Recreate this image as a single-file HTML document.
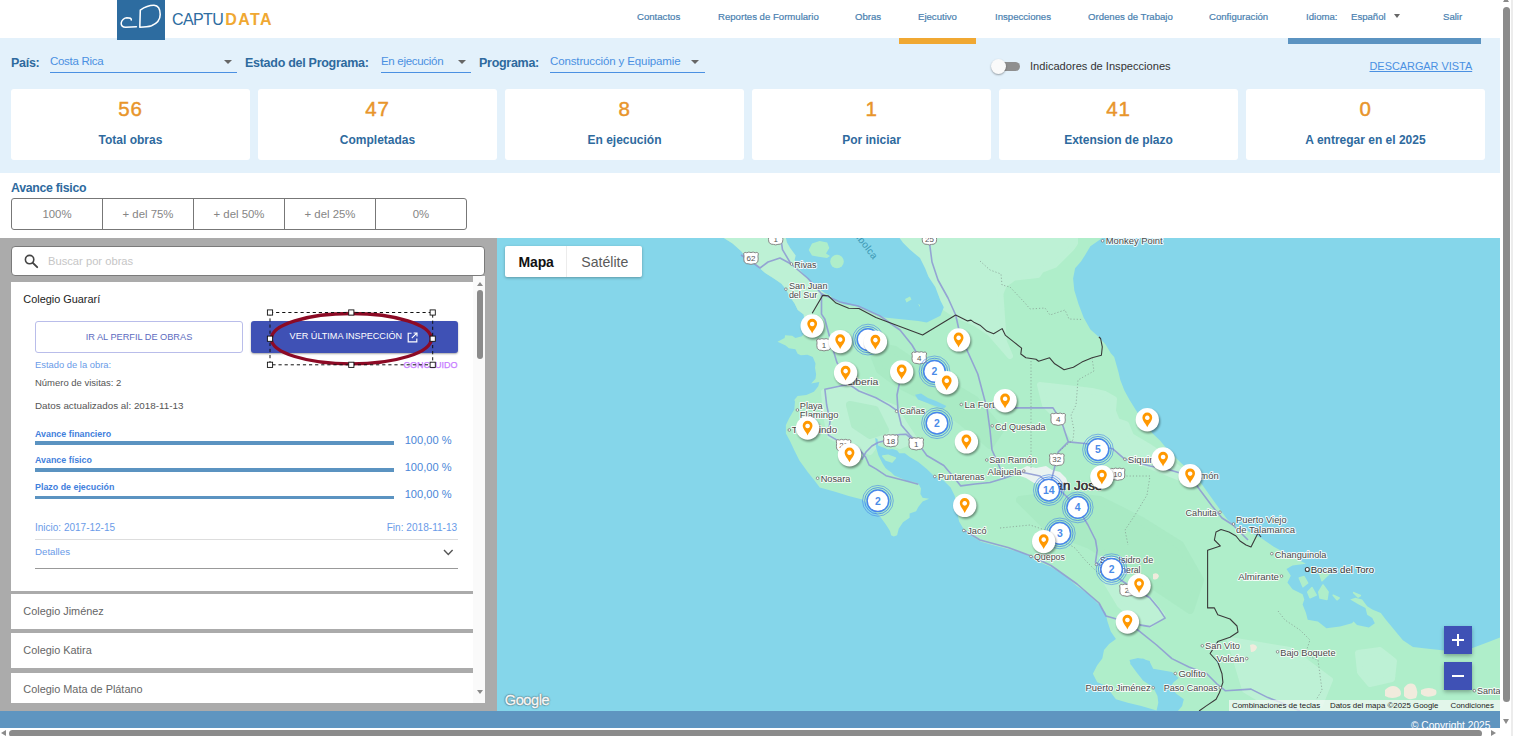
<!DOCTYPE html>
<html lang="es">
<head>
<meta charset="utf-8">
<title>CaptuData - Ejecutivo</title>
<style>
*{box-sizing:border-box;margin:0;padding:0}
html,body{width:1513px;height:736px;overflow:hidden;background:#fff}
body{font-family:"Liberation Sans",sans-serif;position:relative;color:#2e6a9e}
.abs{position:absolute}
#hdr{left:0;top:0;width:1500px;height:38px;background:#fff}
#logo{left:117px;top:0;width:48px;height:40px;background:#2d6ca0}
#brand{left:172px;top:8px;font-size:16px;line-height:24px;color:#2d6ca0;letter-spacing:-0.6px;white-space:nowrap}
#brand b{color:#f0a832;font-weight:bold;letter-spacing:1.45px;margin-left:2px}
.nav{top:10px;-webkit-text-stroke:.2px #4a7fb0;font-size:9.6px;line-height:13px;color:#4a7fb0;white-space:nowrap;text-align:center}
#band{left:0;top:38px;width:1500px;height:135px;background:#e3f1fb}
.lbl{font-size:12.5px;font-weight:bold;color:#2e6a9e;white-space:nowrap;line-height:16px;letter-spacing:-0.28px}
.sel{border-bottom:1px solid #4a90e2;height:20px;font-size:11.5px;color:#4a90e2;line-height:16px;white-space:nowrap;overflow:hidden;letter-spacing:-0.3px}
.caret{width:0;height:0;border-left:4px solid transparent;border-right:4px solid transparent;border-top:4px solid #666}
.card{top:89.4px;width:239px;height:71px;background:#fff;border-radius:3px;text-align:center}
.card .n{position:absolute;left:0;right:0;top:8px;font-size:20.5px;line-height:24px;color:#e8952b;-webkit-text-stroke:0.45px #e8952b;letter-spacing:0.8px}
.card .t{position:absolute;left:0;right:0;top:43px;font-size:12px;line-height:16px;font-weight:bold;color:#2e6a9e}
#grp{left:11px;top:198.3px;width:456px;height:31.3px;border:1px solid #777;border-radius:3px;display:flex}
#grp div{flex:1;border-right:1px solid #777;text-align:center;font-size:11.4px;line-height:31.6px;color:#858585}
#grp div:last-child{border-right:0}
#grey{left:0;top:238px;width:497px;height:473px;background:#ababab}
#map{left:497px;top:238px;width:1003px;height:473px;background:#86d6ea;overflow:hidden}
#foot{left:0;top:711px;width:1500px;height:17px;background:#5f95c0;overflow:hidden}
#vsb{left:1500px;top:0;width:13px;height:736px;background:#fff}
#hsb{left:0;top:728px;width:1500px;height:8px;background:#fff;overflow:hidden}

#search{left:11px;top:246px;width:474px;height:30px;background:#fff;border:1px solid #7a7a7a;border-radius:4px}
#search span{position:absolute;left:36px;top:6.6px;font-size:11.2px;line-height:14px;color:#c6c6c6}
#list{left:11px;top:276px;width:474px;height:427px;background:#ababab;overflow:hidden}
.item{position:absolute;left:0;width:462px;background:#fff}
.item h4{position:absolute;left:12.3px;font-weight:normal;font-size:10.9px;line-height:14px;color:#666;white-space:nowrap}
#sb{position:absolute;left:462px;top:0;width:12px;height:427px;background:#fafafa}
.t10{position:absolute;font-size:10px;line-height:12px;white-space:nowrap}
.bar{position:absolute;left:24px;width:359.4px;height:3.7px;background:#5b93c1}
.pct{position:absolute;left:393.7px;font-size:11.1px;line-height:14px;color:#4a86d8;white-space:nowrap}
.pl{position:absolute;left:24px;font-size:8.9px;line-height:12px;font-weight:bold;color:#3f80dc;white-space:nowrap}
</style>
</head>
<body>
<div id="hdr" class="abs"></div>
<div id="band" class="abs"></div>
<div id="logo" class="abs"><svg width="48" height="40" viewBox="0 0 48 40" fill="none" stroke="#fff" stroke-width="1.55" stroke-linecap="round" stroke-linejoin="round"><path d="M14.3 20 C14.4 18.4 13.2 17.8 9.9 17.8 C7.6 17.9 4.5 19.8 4.2 23 C4 25.6 5.6 27.2 8.7 27.3 L19.4 26.7"/><path d="M23.3 10.1 L22.8 27.2 C27 27.2 31.2 26.9 34.5 25.8 C39.5 23.8 43.2 19.5 43.2 14.6 C43.2 9.5 41 5.6 37 5.3 C32 5.2 27.5 7.2 23.3 10.1 Z"/></svg></div>
<div id="brand" class="abs">CAPTU<b>DATA</b></div>

<div class="abs nav" style="left:637px">Contactos</div>
<div class="abs nav" style="left:718px">Reportes de Formulario</div>
<div class="abs nav" style="left:855px">Obras</div>
<div class="abs nav" style="left:918px">Ejecutivo</div>
<div class="abs nav" style="left:995px">Inspecciones</div>
<div class="abs nav" style="left:1088px">Ordenes de Trabajo</div>
<div class="abs nav" style="left:1209px">Configuración</div>
<div class="abs nav" style="left:1306px">Idioma:</div>
<div class="abs nav" style="left:1351px">Español</div>
<div class="abs nav" style="left:1443px">Salir</div>
<div class="abs" style="left:899px;top:38px;width:77px;height:6px;background:#f0a832"></div>
<div class="abs" style="left:1288px;top:38px;width:193px;height:6px;background:#5b93c1"></div>

<div class="abs lbl" style="left:11px;top:54.8px">País:</div>
<div class="abs sel" style="left:50px;top:53px;width:187px">Costa Rica</div>
<div class="abs caret" style="left:224px;top:60px"></div><div class="abs caret" style="left:458px;top:60px"></div><div class="abs caret" style="left:691px;top:60px"></div><div class="abs caret" style="left:1394px;top:14px;border-left-width:3.3px;border-right-width:3.3px"></div><div class="abs lbl" style="left:245px;top:54.8px">Estado del Programa:</div>
<div class="abs sel" style="left:381px;top:53px;width:90px">En ejecución</div>
<div class="abs lbl" style="left:479px;top:54.8px">Programa:</div>
<div class="abs sel" style="left:550px;top:53px;width:155px;letter-spacing:-.13px">Construcción y Equipamie</div>

<div class="abs" style="left:995px;top:62px;width:25px;height:9px;border-radius:5px;background:#8f8f8f"></div>
<div class="abs" style="left:991px;top:59px;width:15px;height:15px;border-radius:50%;background:#fafafa;box-shadow:0 1px 2px rgba(0,0,0,.35)"></div>
<div class="abs" style="left:1030px;top:59px;font-size:11.1px;line-height:14px;color:#333;white-space:nowrap">Indicadores de Inspecciones</div>
<div class="abs" style="left:1369.5px;top:59px;font-size:10.9px;line-height:14px;color:#4a90e2;text-decoration:underline;white-space:nowrap">DESCARGAR VISTA</div>
<div class="abs card" style="left:11px"><div class="n">56</div><div class="t">Total obras</div></div>
<div class="abs card" style="left:258px"><div class="n">47</div><div class="t">Completadas</div></div>
<div class="abs card" style="left:505px"><div class="n">8</div><div class="t">En ejecución</div></div>
<div class="abs card" style="left:752px"><div class="n">1</div><div class="t">Por iniciar</div></div>
<div class="abs card" style="left:999px"><div class="n">41</div><div class="t">Extension de plazo</div></div>
<div class="abs card" style="left:1246px"><div class="n">0</div><div class="t">A entregar en el 2025</div></div>

<div class="abs lbl" style="left:11px;top:179.8px;font-size:12.3px">Avance fisico</div>
<div id="grp" class="abs"><div>100%</div><div>+ del 75%</div><div>+ del 50%</div><div>+ del 25%</div><div>0%</div></div>

<div id="grey" class="abs"></div>
<div id="search" class="abs">
<svg style="position:absolute;left:12px;top:7px" width="15" height="15" viewBox="0 0 15 15"><circle cx="5.6" cy="5.6" r="4.2" fill="none" stroke="#444" stroke-width="1.6"/><path d="M8.8 8.8 L13.2 13.2" stroke="#444" stroke-width="1.9" stroke-linecap="round"/></svg>
<span>Buscar por obras</span></div>
<div id="list" class="abs">
 <div class="item" style="top:6px;height:308.5px">
  <h4 style="top:10px;color:#222">Colegio Guararí</h4>
  <div style="position:absolute;left:24px;top:39px;width:208px;height:32px;border:1px solid #b9bdea;border-radius:3px;text-align:center;font-size:9.2px;line-height:30px;color:#5c6bc0;white-space:nowrap">IR AL PERFIL DE OBRAS</div>
  <div style="position:absolute;left:240px;top:39px;width:207px;height:32px;background:#3f51b5;border-radius:3px;box-shadow:0 1px 2px rgba(0,0,0,.35);color:#fff;font-size:9.1px;line-height:31px;white-space:nowrap"><span style="position:absolute;left:38.6px">VER ÚLTIMA INSPECCIÓN</span>
   <svg style="position:absolute;left:155.5px;top:10.5px" width="11" height="11" viewBox="0 0 11 11" fill="none" stroke="#fff" stroke-width="1.15"><path d="M4.6 1.2 H1.2 V9.8 H9.8 V6.4"/><path d="M6.6 1 H10 V4.4 M9.8 1.2 L4.8 6.2"/></svg></div>
  <div class="t10" style="left:24px;top:76.8px;color:#6a9be8;font-size:9.4px">Estado de la obra:</div>
  <div class="t10" style="left:392.4px;top:76.5px;color:#c77dff;-webkit-text-stroke:.25px #c77dff;font-size:9px">CONCLUIDO</div>
  <div class="t10" style="left:24px;top:94.6px;color:#555;font-size:9.47px">Número de visitas: 2</div>
  <div class="t10" style="left:24px;top:118.4px;color:#555;font-size:9.84px">Datos actualizados al: 2018-11-13</div>
  <div class="pl" style="top:145.6px">Avance financiero</div><div class="bar" style="top:159.1px"></div><div class="pct" style="top:151px">100,00 %</div>
  <div class="pl" style="top:172.4px">Avance físico</div><div class="bar" style="top:186px"></div><div class="pct" style="top:178px">100,00 %</div>
  <div class="pl" style="top:199.4px">Plazo de ejecución</div><div class="bar" style="top:213.6px"></div><div class="pct" style="top:205px">100,00 %</div>
  <div class="t10" style="left:24px;top:240px;color:#6a9be8;font-size:10px">Inicio: 2017-12-15</div>
  <div class="t10" style="left:375.7px;top:240px;color:#6a9be8;font-size:10.1px">Fin: 2018-11-13</div>
  <div style="position:absolute;left:24px;top:257px;width:423px;height:1px;background:#ddd"></div>
  <div class="t10" style="left:24px;top:263.8px;color:#6a9be8;font-size:9.7px">Detalles</div>
  <svg style="position:absolute;left:432px;top:266.5px" width="11" height="7" viewBox="0 0 11 7"><path d="M1 1 L5.3 5.4 L9.6 1" fill="none" stroke="#555" stroke-width="1.4"/></svg>
  <div style="position:absolute;left:24px;top:286px;width:423px;height:1px;background:#999"></div>
 </div>
 <div class="item" style="top:318.2px;height:35px"><h4 style="top:10.3px">Colegio Jiménez</h4></div>
 <div class="item" style="top:356.9px;height:35.6px"><h4 style="top:10.3px">Colegio Katira</h4></div>
 <div class="item" style="top:396.6px;height:31px"><h4 style="top:9.7px">Colegio Mata de Plátano</h4></div>
 <div id="sb">
  <div style="position:absolute;left:3.5px;top:6px;width:0;height:0;border-left:3.5px solid transparent;border-right:3.5px solid transparent;border-bottom:4.5px solid #8b8b8b"></div>
  <div style="position:absolute;left:3.7px;top:14.3px;width:6px;height:69px;border-radius:3px;background:#8b8b8b"></div>
  <div style="position:absolute;left:3.5px;top:414px;width:0;height:0;border-left:3.5px solid transparent;border-right:3.5px solid transparent;border-top:4.5px solid #8b8b8b"></div>
 </div>
</div>
<svg class="abs" style="left:262px;top:305px;overflow:visible" width="180" height="68" viewBox="262 305 180 68">
 <ellipse cx="351.3" cy="338.7" rx="80" ry="25.2" fill="none" stroke="#8c0a25" stroke-width="3.3"/>
 <rect x="270" y="312.5" width="162.7" height="52.3" fill="none" stroke="#111" stroke-width="1" stroke-dasharray="3.2 2.9"/>
 <g fill="#fff" stroke="#111" stroke-width="0.9">
  <rect x="267.4" y="309.9" width="5.2" height="5.2"/><rect x="348.7" y="309.9" width="5.2" height="5.2"/><rect x="430.1" y="309.9" width="5.2" height="5.2"/>
  <rect x="267.4" y="336.1" width="5.2" height="5.2"/><rect x="430.1" y="336.1" width="5.2" height="5.2"/>
  <rect x="267.4" y="362.2" width="5.2" height="5.2"/><rect x="348.7" y="362.2" width="5.2" height="5.2"/><rect x="430.1" y="362.2" width="5.2" height="5.2"/>
 </g>
</svg>

<div id="map" class="abs">
<svg width="1003" height="473" viewBox="497 238 1003 473" style="position:absolute;left:0;top:0;font-family:'Liberation Sans',sans-serif">
<defs><filter id="bl" x="-30%" y="-30%" width="160%" height="160%"><feGaussianBlur stdDeviation="0.9"/></filter></defs>
<rect x="497" y="238" width="1003" height="473" fill="#85d6ea"/>
<path d="M1102.3 238.0 L1090.4 246.2 L1085.3 254.7 L1081.0 261.5 L1075.1 268.3 L1073.1 278.5 L1074.3 290.3 L1078.5 303.9 L1083.6 317.5 L1090.4 329.4 L1098.9 337.0 L1105.7 344.7 L1110.8 353.2 L1114.2 357.0 L1118.5 372.3 L1120.3 380.0 L1124.4 390.6 L1129.3 399.6 L1137.4 412.6 L1145.0 423.5 L1152.9 433.8 L1160.0 440.5 L1166.8 448.7 L1177.0 458.9 L1183.8 465.5 L1195.7 475.7 L1204.2 487.6 L1212.7 499.4 L1221.2 511.3 L1227.2 519.3 L1234.0 525.2 L1247.6 531.1 L1261.1 537.9 L1273.8 546.8 L1295.9 558.7 L1306.0 563.8 L1292.5 565.5 L1286.5 568.9 L1290.8 575.7 L1287.4 582.5 L1292.5 589.3 L1302.6 594.3 L1304.3 599.4 L1302.6 604.5 L1306.0 613.0 L1307.7 619.8 L1317.9 621.5 L1326.4 628.3 L1340.0 626.6 L1351.9 623.2 L1353.6 621.5 L1357.0 624.9 L1368.9 627.5 L1374.8 623.2 L1372.3 618.1 L1367.2 614.7 L1365.5 607.9 L1358.7 604.5 L1350.2 599.4 L1355.3 597.7 L1362.1 599.4 L1367.2 606.2 L1372.3 609.6 L1380.8 613.0 L1385.9 619.8 L1394.4 630.0 L1402.9 640.2 L1413.0 647.0 L1428.3 648.7 L1444.5 650.4 L1472.5 648.0 L1487.8 642.2 L1500.0 637.5 L1500.0 711.0 L1177.9 711.0 L1182.1 706.1 L1183.8 699.3 L1177.0 694.2 L1170.2 687.4 L1173.6 682.3 L1178.7 678.1 L1171.9 672.1 L1163.4 670.4 L1153.2 668.7 L1149.8 662.0 L1143.0 658.6 L1132.9 659.4 L1130.3 663.7 L1136.3 672.1 L1143.0 680.6 L1153.2 687.4 L1157.5 695.9 L1158.3 702.7 L1156.6 710.4 L1141.3 706.1 L1127.8 702.7 L1115.9 699.3 L1110.8 692.5 L1105.7 685.7 L1097.2 682.3 L1092.9 673.8 L1097.2 665.3 L1102.3 658.6 L1104.0 650.1 L1109.1 644.1 L1115.9 639.0 L1110.8 631.4 L1107.4 621.2 L1105.7 613.0 L1098.9 604.5 L1088.7 594.3 L1076.8 585.9 L1064.9 575.7 L1051.3 567.2 L1036.0 560.4 L1024.2 553.5 L1008.0 549.0 L993.6 545.3 L981.0 541.8 L972.7 536.8 L964.2 530.0 L959.1 521.5 L957.4 513.0 L954.8 496.0 L950.6 487.6 L943.8 480.8 L934.5 476.5 L926.8 468.9 L918.3 462.1 L909.8 457.0 L904.8 453.3 L899.3 453.3 L897.2 450.5 L892.8 448.9 L887.9 449.5 L884.1 447.8 L878.4 445.7 L877.6 439.1 L875.2 437.8 L875.9 446.8 L878.4 455.3 L882.7 463.8 L885.5 468.0 L887.8 470.0 L891.1 472.2 L894.3 475.4 L900.9 478.2 L907.4 480.9 L913.9 482.0 L918.3 483.6 L921.0 488.5 L920.4 493.9 L922.6 497.7 L929.1 498.8 L922.6 501.5 L918.3 507.0 L916.1 511.3 L909.6 513.5 L909.6 517.8 L903.0 522.2 L898.7 528.7 L897.1 535.2 L893.8 536.5 L891.1 535.2 L890.0 530.9 L885.7 524.3 L880.2 516.7 L874.2 511.0 L862.3 499.4 L848.7 496.0 L835.1 491.8 L819.8 487.6 L814.7 480.8 L807.9 472.3 L799.4 460.4 L794.3 450.2 L790.0 441.0 L785.9 433.4 L785.9 424.9 L789.3 418.1 L794.3 409.6 L795.0 401.5 L794.3 400.0 L797.6 396.1 L806.3 395.0 L813.9 391.7 L818.3 386.3 L819.3 382.0 L811.2 383.6 L815.5 378.7 L816.1 374.3 L815.0 367.8 L815.5 363.5 L812.8 357.0 L807.4 354.8 L800.9 355.3 L797.6 353.7 L795.4 349.3 L788.9 348.3 L785.7 345.5 L777.5 341.7 L784.6 337.9 L785.1 335.2 L792.2 335.8 L795.4 337.9 L802.0 336.3 L806.0 330.0 L804.5 322.0 L803.7 314.5 L797.8 309.9 L794.6 303.4 L790.2 296.9 L785.9 289.3 L781.5 283.8 L773.9 278.4 L765.2 273.0 L756.5 265.3 L746.7 258.8 L741.3 251.2 L732.6 243.6 L723.9 238.0 Z" fill="#afeeca"/>
<clipPath id="lc"><path d="M1102.3 238.0 L1090.4 246.2 L1085.3 254.7 L1081.0 261.5 L1075.1 268.3 L1073.1 278.5 L1074.3 290.3 L1078.5 303.9 L1083.6 317.5 L1090.4 329.4 L1098.9 337.0 L1105.7 344.7 L1110.8 353.2 L1114.2 357.0 L1118.5 372.3 L1120.3 380.0 L1124.4 390.6 L1129.3 399.6 L1137.4 412.6 L1145.0 423.5 L1152.9 433.8 L1160.0 440.5 L1166.8 448.7 L1177.0 458.9 L1183.8 465.5 L1195.7 475.7 L1204.2 487.6 L1212.7 499.4 L1221.2 511.3 L1227.2 519.3 L1234.0 525.2 L1247.6 531.1 L1261.1 537.9 L1273.8 546.8 L1295.9 558.7 L1306.0 563.8 L1292.5 565.5 L1286.5 568.9 L1290.8 575.7 L1287.4 582.5 L1292.5 589.3 L1302.6 594.3 L1304.3 599.4 L1302.6 604.5 L1306.0 613.0 L1307.7 619.8 L1317.9 621.5 L1326.4 628.3 L1340.0 626.6 L1351.9 623.2 L1353.6 621.5 L1357.0 624.9 L1368.9 627.5 L1374.8 623.2 L1372.3 618.1 L1367.2 614.7 L1365.5 607.9 L1358.7 604.5 L1350.2 599.4 L1355.3 597.7 L1362.1 599.4 L1367.2 606.2 L1372.3 609.6 L1380.8 613.0 L1385.9 619.8 L1394.4 630.0 L1402.9 640.2 L1413.0 647.0 L1428.3 648.7 L1444.5 650.4 L1472.5 648.0 L1487.8 642.2 L1500.0 637.5 L1500.0 711.0 L1177.9 711.0 L1182.1 706.1 L1183.8 699.3 L1177.0 694.2 L1170.2 687.4 L1173.6 682.3 L1178.7 678.1 L1171.9 672.1 L1163.4 670.4 L1153.2 668.7 L1149.8 662.0 L1143.0 658.6 L1132.9 659.4 L1130.3 663.7 L1136.3 672.1 L1143.0 680.6 L1153.2 687.4 L1157.5 695.9 L1158.3 702.7 L1156.6 710.4 L1141.3 706.1 L1127.8 702.7 L1115.9 699.3 L1110.8 692.5 L1105.7 685.7 L1097.2 682.3 L1092.9 673.8 L1097.2 665.3 L1102.3 658.6 L1104.0 650.1 L1109.1 644.1 L1115.9 639.0 L1110.8 631.4 L1107.4 621.2 L1105.7 613.0 L1098.9 604.5 L1088.7 594.3 L1076.8 585.9 L1064.9 575.7 L1051.3 567.2 L1036.0 560.4 L1024.2 553.5 L1008.0 549.0 L993.6 545.3 L981.0 541.8 L972.7 536.8 L964.2 530.0 L959.1 521.5 L957.4 513.0 L954.8 496.0 L950.6 487.6 L943.8 480.8 L934.5 476.5 L926.8 468.9 L918.3 462.1 L909.8 457.0 L904.8 453.3 L899.3 453.3 L897.2 450.5 L892.8 448.9 L887.9 449.5 L884.1 447.8 L878.4 445.7 L877.6 439.1 L875.2 437.8 L875.9 446.8 L878.4 455.3 L882.7 463.8 L885.5 468.0 L887.8 470.0 L891.1 472.2 L894.3 475.4 L900.9 478.2 L907.4 480.9 L913.9 482.0 L918.3 483.6 L921.0 488.5 L920.4 493.9 L922.6 497.7 L929.1 498.8 L922.6 501.5 L918.3 507.0 L916.1 511.3 L909.6 513.5 L909.6 517.8 L903.0 522.2 L898.7 528.7 L897.1 535.2 L893.8 536.5 L891.1 535.2 L890.0 530.9 L885.7 524.3 L880.2 516.7 L874.2 511.0 L862.3 499.4 L848.7 496.0 L835.1 491.8 L819.8 487.6 L814.7 480.8 L807.9 472.3 L799.4 460.4 L794.3 450.2 L790.0 441.0 L785.9 433.4 L785.9 424.9 L789.3 418.1 L794.3 409.6 L795.0 401.5 L794.3 400.0 L797.6 396.1 L806.3 395.0 L813.9 391.7 L818.3 386.3 L819.3 382.0 L811.2 383.6 L815.5 378.7 L816.1 374.3 L815.0 367.8 L815.5 363.5 L812.8 357.0 L807.4 354.8 L800.9 355.3 L797.6 353.7 L795.4 349.3 L788.9 348.3 L785.7 345.5 L777.5 341.7 L784.6 337.9 L785.1 335.2 L792.2 335.8 L795.4 337.9 L802.0 336.3 L806.0 330.0 L804.5 322.0 L803.7 314.5 L797.8 309.9 L794.6 303.4 L790.2 296.9 L785.9 289.3 L781.5 283.8 L773.9 278.4 L765.2 273.0 L756.5 265.3 L746.7 258.8 L741.3 251.2 L732.6 243.6 L723.9 238.0 Z"/></clipPath><g clip-path="url(#lc)">
<path d="M899.6 238.0 L1075.0 238.0 L1075.0 243.0 L1071.7 247.9 L1061.5 258.1 L1054.7 264.9 L1041.1 270.0 L1037.7 275.1 L1014.0 277.6 L1003.8 285.2 L1000.4 293.7 L1002.1 317.5 L1003.8 341.3 L1010.0 356.0 L990.0 333.0 L975.0 323.0 L956.0 315.0 L944.0 307.0 L940.4 300.5 L935.3 287.0 L928.5 276.8 L925.1 268.3 L920.0 258.1 L909.8 249.6 Z" fill="#c1f2d7" stroke="#c1f2d7" stroke-width="6" stroke-linejoin="round" opacity=".8"/>
<path d="M722.0 236.0 L787.0 236.0 L790.0 248.0 L795.0 258.0 L798.0 268.0 L806.0 277.0 L815.0 286.0 L822.0 293.0 L815.0 305.0 L806.0 316.0 L796.0 311.0 L788.0 298.0 L780.0 285.0 L764.0 274.0 L750.0 267.0 L738.0 252.0 Z" fill="#c1f2d7" stroke="#c1f2d7" stroke-width="6" stroke-linejoin="round" opacity=".8"/>
<path d="M824.0 392.0 L850.0 386.0 L870.0 398.0 L895.0 408.0 L905.0 425.0 L915.0 440.0 L900.0 446.0 L880.0 438.0 L870.0 452.0 L860.0 448.0 L842.0 442.0 L830.0 436.0 L826.0 415.0 Z" fill="#c1f2d7" stroke="#c1f2d7" stroke-width="6" stroke-linejoin="round" opacity=".8"/>
<path d="M1040.0 385.0 L1067.0 388.0 L1092.0 391.0 L1105.0 394.0 L1114.0 399.0 L1113.0 411.0 L1117.0 421.0 L1126.0 424.0 L1131.0 436.0 L1148.0 446.0 L1163.0 456.0 L1178.0 468.0 L1190.0 481.0 L1180.0 478.0 L1160.0 470.0 L1140.0 462.0 L1120.0 452.0 L1100.0 440.0 L1075.0 440.0 L1060.0 420.0 L1045.0 405.0 Z" fill="#c1f2d7" stroke="#c1f2d7" stroke-width="6" stroke-linejoin="round" opacity=".8"/>
<path d="M1105.0 580.0 L1130.0 592.0 L1150.0 600.0 L1162.0 615.0 L1150.0 625.0 L1135.0 618.0 L1120.0 605.0 Z" fill="#c1f2d7" stroke="#c1f2d7" stroke-width="6" stroke-linejoin="round" opacity=".8"/>
<path d="M1230.0 640.0 L1290.0 650.0 L1330.0 680.0 L1320.0 705.0 L1270.0 705.0 L1245.0 690.0 Z" fill="#c1f2d7" stroke="#c1f2d7" stroke-width="6" stroke-linejoin="round" opacity=".8"/>
<path d="M1358.0 653.0 L1380.0 650.0 L1394.0 661.0 L1392.0 679.0 L1370.0 684.0 L1360.0 672.0 Z" fill="#c1f2d7" stroke="#c1f2d7" stroke-width="6" stroke-linejoin="round" opacity=".8"/>
<path d="M870.0 345.0 L895.0 350.0 L925.0 370.0 L950.0 385.0 L975.0 400.0 L1000.0 430.0 L990.0 445.0 L960.0 420.0 L930.0 400.0 L900.0 385.0 L880.0 370.0 Z" fill="#a4e7c0" stroke="#a4e7c0" stroke-width="8" stroke-linejoin="round" opacity=".55"/>
<path d="M1020.0 500.0 L1060.0 495.0 L1100.0 500.0 L1140.0 520.0 L1180.0 545.0 L1200.0 580.0 L1190.0 610.0 L1160.0 590.0 L1130.0 570.0 L1090.0 545.0 L1050.0 530.0 Z" fill="#a4e7c0" stroke="#a4e7c0" stroke-width="8" stroke-linejoin="round" opacity=".55"/>
<path d="M850.0 405.0 L875.0 410.0 L885.0 430.0 L870.0 435.0 L855.0 425.0 Z" fill="#a4e7c0" stroke="#a4e7c0" stroke-width="8" stroke-linejoin="round" opacity=".55"/>
</g>
<path d="M785.9 238.0 L787.0 242.5 L790.2 248.0 L795.7 255.6 L794.6 259.9 L797.8 267.5 L804.3 275.1 L810.9 281.7 L818.5 288.2 L823.9 292.5 L830.4 295.8 L835.9 301.2 L844.6 304.5 L852.2 305.6 L860.0 306.7 L874.2 313.3 L884.4 317.5 L901.3 319.2 L918.3 320.9 L926.8 322.6 L940.4 315.8 L943.8 307.3 L940.4 300.5 L935.3 287.0 L928.5 276.8 L925.1 268.3 L920.0 258.1 L909.8 249.6 L903.0 242.8 L899.6 238.0 Z" fill="#85d6ea"/>
<path d="M808.7 250.1 L812.0 243.6 L819.6 240.9 L827.2 242.5 L829.3 248.0 L826.0 253.4 L830.0 256.0 L827.0 258.0 L818.5 256.7 L812.0 255.6 Z" fill="#afeeca"/><circle cx="837" cy="261.5" r="6.8" fill="#afeeca"/>
<path d="M905 299 l5 -2.5 l1.5 3 l-5 3 Z M918 304 l2 1 l0 2 Z" fill="#afeeca"/>
<path d="M1299.3 578.0 L1304.0 576.5 L1307.7 583.0 L1303.0 586.7 Z" fill="#afeeca" stroke="#afeeca" stroke-width="1.5" stroke-linejoin="round"/>
<path d="M1318.8 592.0 L1323.0 585.0 L1328.1 592.0 L1327.0 599.4 L1320.0 598.0 Z" fill="#afeeca" stroke="#afeeca" stroke-width="1.5" stroke-linejoin="round"/>
<path d="M1319.6 573.5 L1329.0 574.0 L1322.0 580.8 Z" fill="#afeeca" stroke="#afeeca" stroke-width="1.5" stroke-linejoin="round"/>
<path d="M1307.7 592.0 L1312.0 587.6 L1316.2 595.0 L1310.0 597.7 Z" fill="#afeeca" stroke="#afeeca" stroke-width="1.5" stroke-linejoin="round"/>
<path d="M1333.2 595.2 L1339.2 598.0 L1337.0 599.8 Z" fill="#afeeca" stroke="#afeeca" stroke-width="1.5" stroke-linejoin="round"/>
<path d="M1353.6 592.6 L1360.4 595.5 L1358.0 597.0 Z" fill="#afeeca" stroke="#afeeca" stroke-width="1.5" stroke-linejoin="round"/>
<path d="M882.7 456.0 L888.0 455.3 L895.4 458.0 L892.0 462.0 L886.0 460.0 Z" fill="#afeeca" stroke="#afeeca" stroke-width="1.5" stroke-linejoin="round"/>
<path d="M915.0 394.8 L921.0 393.5 L928.0 398.0 L936.0 401.0 L946.3 406.0 L944.0 408.5 L935.0 406.0 L926.0 402.5 L918.0 399.5 Z" fill="#85d6ea"/>
<path d="M1129.5 660.0 L1138.0 658.0 L1149.8 661.0 L1150.0 665.0 L1131.0 665.0 Z" fill="#85d6ea"/>
<path d="M1019 470 L1027 466 L1036 468 L1046 466 L1052 470 L1060 472 L1066 478 L1069 486 L1062 492 L1052 489 L1044 484 L1034 483 L1026 478 L1020 476 Z" fill="#f1f3f5" opacity=".9"/>
<path d="M1385 690 q6 -6 12 -3 q6 4 3 9 q-8 4 -15 0 Z" fill="#f1ebdd"/>
<path d="M1404 688 q5 -7 11 -3 q4 7 1 13 q-8 3 -12 -2 Z" fill="#f1ebdd"/>
<path d="M1421 690 q8 -4 15 0 q2 5 -3 6 q-8 2 -12 -2 Z" fill="#f1ebdd"/>
<path d="M1250 645 q5 -2 7 2 q-1 5 -6 5 Z" fill="#f1ebdd"/>
<path d="M1153 574 q5 -2 6 2 q-2 5 -6 3 Z" fill="#f1ebdd"/>
<path d="M780.8 238.0 L782.5 249.6 L791.0 264.0 L808.0 278.5 L821.5 293.7 L821.5 314.1 L824.9 319.2 L831.7 344.7 L836.8 362.1 L848.7 384.2 L858.9 391.0 L875.9 397.7 L889.5 405.4 L898.0 411.3 L901.3 424.9 L909.8 435.1 L918.3 443.6 L926.8 455.5 L943.8 465.5 L954.0 477.4 L960.8 485.9 L975.0 484.0 L990.0 482.5 L1005.0 478.0 L1020.8 472.0 L1040.0 476.0 L1050.0 485.0" fill="none" stroke="#8f9bd3" stroke-width="1.6" stroke-linejoin="round" opacity=".9"/>
<path d="M848.7 384.2 L824.9 389.3 L826.6 404.5 L830.0 421.5 L828.3 435.1 L840.2 441.9 L858.9 448.7 L865.7 457.2 L869.1 465.0 L875.9 468.9 L886.0 475.7 L908.2 481.6 L918.3 484.2" fill="none" stroke="#8f9bd3" stroke-width="1.6" stroke-linejoin="round" opacity=".9"/>
<path d="M955.7 315.0 L959.0 330.0 L967.6 351.5 L977.8 374.0 L986.8 407.9 L1053.0 407.9 L1061.5 421.5 L1068.3 441.9 L1058.1 452.1 L1054.0 470.0 L1050.0 485.0" fill="none" stroke="#8f9bd3" stroke-width="1.6" stroke-linejoin="round" opacity=".9"/>
<path d="M1068.3 441.9 L1085.0 443.5 L1112.5 448.7 L1124.4 458.9 L1150.0 466.0 L1170.0 470.0 L1190.0 476.0 L1200.0 490.0 L1212.0 506.0 L1222.0 518.0 L1233.0 525.0 L1248.0 540.0" fill="none" stroke="#8f9bd3" stroke-width="1.6" stroke-linejoin="round" opacity=".9"/>
<path d="M1050.0 485.0 L1062.0 492.0 L1077.0 507.0 L1088.0 525.0 L1095.5 540.0 L1097.2 550.2 L1095.5 562.1 L1124.4 582.5 L1149.8 597.7 L1158.3 607.9 L1165.1 618.1 L1149.8 626.6 L1139.6 624.9" fill="none" stroke="#8f9bd3" stroke-width="1.6" stroke-linejoin="round" opacity=".9"/>
<path d="M963.8 530.0 L980.0 540.0 L1008.0 547.5 L1031.0 556.0 L1051.0 565.5 L1077.0 584.0 L1099.0 603.0 L1106.0 616.0 L1127.0 622.0 L1139.6 631.4 L1156.6 645.0 L1171.9 658.6 L1188.9 667.0 L1206.8 673.8 L1217.0 684.0 L1225.5 690.8 L1251.0 689.1 L1267.9 697.6 L1281.5 702.7 L1300.0 711.0" fill="none" stroke="#8f9bd3" stroke-width="1.6" stroke-linejoin="round" opacity=".9"/>
<path d="M741.0 255.0 L752.0 262.0 L760.0 268.0 L768.0 262.0 L780.0 258.0 L791.0 264.0" fill="none" stroke="#8f9bd3" stroke-width="1.6" stroke-linejoin="round" opacity=".9"/>
<path d="M821.5 293.7 L840.0 302.0 L858.0 306.0 L880.0 316.0 L900.0 330.0 L912.0 345.0 L919.0 357.0 L930.0 365.0" fill="none" stroke="#8f9bd3" stroke-width="1.6" stroke-linejoin="round" opacity=".9"/>
<path d="M901.7 372.0 L897.0 395.0 L898.0 411.3" fill="none" stroke="#8f9bd3" stroke-width="1.6" stroke-linejoin="round" opacity=".9"/>
<path d="M929.0 239.0 L932.0 262.0 L938.0 280.0 L948.0 298.0 L955.7 315.0" fill="none" stroke="#8f9bd3" stroke-width="1.6" stroke-linejoin="round" opacity=".9"/>
<path d="M861.7 459.6 L866.0 452.0 L871.9 446.0 L878.0 442.5 L883.8 441.0 L892.3 435.9 L900.0 434.5 L905.9 434.2 L912.0 439.0 L916.4 444.4" fill="none" stroke="#8f9bd3" stroke-width="1.6" stroke-linejoin="round" opacity=".9"/>
<path d="M987.0 408.0 L990.0 430.0 L992.0 450.0 L1000.0 468.0 L1005.0 478.0" fill="none" stroke="#8f9bd3" stroke-width="1.6" stroke-linejoin="round" opacity=".9"/>
<path d="M812.2 313.3 L822.7 295.4 L828.3 295.8 L836.0 303.1 L848.7 308.2 L858.9 308.5 L875.9 317.5 L922.6 335.0 L955.7 315.0 L967.6 320.9 L971.0 320.1 L974.4 322.6 L980.0 325.2 L986.8 331.1 L993.6 333.7 L1002.1 328.6 L1005.5 335.4 L1014.0 342.1 L1021.6 348.1 L1020.8 354.0 L1025.9 357.8 L1036.0 359.3 L1038.6 361.2 L1049.6 357.8 L1054.7 363.8 L1064.1 369.7 L1073.4 367.2 L1081.9 362.1 L1092.1 357.8 L1101.4 355.3 L1102.3 346.8 L1100.6 338.5 L1098.9 337.0" fill="none" stroke="#3a3a3a" stroke-width="1.1" stroke-linejoin="round"/>
<path d="M1261.0 537.0 L1258.0 533.0 L1254.0 541.0 L1251.0 547.0 L1246.0 545.0 L1240.0 541.0 L1236.0 536.0 L1229.0 532.0 L1221.0 529.5 L1216.0 532.0 L1214.4 540.0 L1220.3 545.9 L1207.6 550.2 L1207.6 607.9 L1214.4 607.9 L1217.8 614.7 L1230.0 619.0 L1237.0 626.0 L1238.0 632.0 L1230.0 637.3 L1217.8 641.6 L1210.1 653.5 L1217.8 662.0 L1222.0 673.8 L1222.9 682.3 L1219.5 692.5 L1216.1 699.3 L1205.9 706.1 L1199.1 711.0" fill="none" stroke="#3a3a3a" stroke-width="1.1" stroke-linejoin="round"/>
<path d="M980.0 261.0 L990.0 270.0 L1001.0 274.0 L1002.0 285.0 L1010.0 287.0 L1025.0 303.0 L1030.0 309.0 L1045.0 308.0 L1050.0 315.0 L1065.0 310.0 L1069.0 319.0 L1083.0 319.5" fill="none" stroke="#7d8c86" stroke-width=".8" stroke-dasharray="1.2 2" opacity=".8"/>
<path d="M1031.0 361.0 L1031.0 470.0" fill="none" stroke="#7d8c86" stroke-width=".8" stroke-dasharray="1.2 2" opacity=".8"/>
<path d="M1092.0 358.0 L1094.0 371.0 L1078.0 380.0 L1076.0 405.0 L1071.0 415.0 L1074.0 430.0 L1073.0 440.0 L1058.0 452.0" fill="none" stroke="#7d8c86" stroke-width=".8" stroke-dasharray="1.2 2" opacity=".8"/>
<path d="M1120.0 476.0 L1150.0 476.0 L1147.0 495.0 L1135.0 515.0 L1125.0 530.0 L1128.0 545.0" fill="none" stroke="#7d8c86" stroke-width=".8" stroke-dasharray="1.2 2" opacity=".8"/>
<path d="M1000.0 528.0 L1030.0 525.0 L1045.0 530.0 L1075.0 548.0 L1085.0 560.0 L1100.0 575.0" fill="none" stroke="#7d8c86" stroke-width=".8" stroke-dasharray="1.2 2" opacity=".8"/>
<path d="M1278.0 611.0 L1285.0 620.0 L1300.0 630.0 L1310.0 640.0 L1305.0 655.0 L1318.0 660.0 L1322.0 690.0 L1316.0 700.0" fill="none" stroke="#7d8c86" stroke-width=".8" stroke-dasharray="1.2 2" opacity=".8"/>
<text font-size="10" fill="#3d98b4" transform="translate(856,238) rotate(52)" letter-spacing=".3">ibolca</text>
<g transform="translate(775.7,238.5)"><path d="M-7.4 -4.6 Q-6 -6.4 -4.2 -5.2 Q-2.2 -6.6 0 -5.4 Q2.2 -6.6 4.2 -5.2 Q6 -6.4 7.4 -4.6 Q6.6 -2 7.2 1 Q7.6 4.6 4.6 5.6 Q2 5.8 0 6.4 Q-2 5.8 -4.6 5.6 Q-7.6 4.6 -7.2 1 Q-6.6 -2 -7.4 -4.6 Z" fill="#fff" stroke="#7c7c7c" stroke-width=".9"/><text y="3" font-size="8" text-anchor="middle" fill="#555">1</text></g>
<g transform="translate(751,258)"><path d="M-7.4 -4.6 Q-6 -6.4 -4.2 -5.2 Q-2.2 -6.6 0 -5.4 Q2.2 -6.6 4.2 -5.2 Q6 -6.4 7.4 -4.6 Q6.6 -2 7.2 1 Q7.6 4.6 4.6 5.6 Q2 5.8 0 6.4 Q-2 5.8 -4.6 5.6 Q-7.6 4.6 -7.2 1 Q-6.6 -2 -7.4 -4.6 Z" fill="#fff" stroke="#7c7c7c" stroke-width=".9"/><text y="3" font-size="8" text-anchor="middle" fill="#555">62</text></g>
<g transform="translate(929.4,238.5)"><path d="M-7.4 -4.6 Q-6 -6.4 -4.2 -5.2 Q-2.2 -6.6 0 -5.4 Q2.2 -6.6 4.2 -5.2 Q6 -6.4 7.4 -4.6 Q6.6 -2 7.2 1 Q7.6 4.6 4.6 5.6 Q2 5.8 0 6.4 Q-2 5.8 -4.6 5.6 Q-7.6 4.6 -7.2 1 Q-6.6 -2 -7.4 -4.6 Z" fill="#fff" stroke="#7c7c7c" stroke-width=".9"/><text y="3" font-size="8" text-anchor="middle" fill="#555">25</text></g>
<g transform="translate(824,344.5)"><path d="M-7.4 -4.6 Q-6 -6.4 -4.2 -5.2 Q-2.2 -6.6 0 -5.4 Q2.2 -6.6 4.2 -5.2 Q6 -6.4 7.4 -4.6 Q6.6 -2 7.2 1 Q7.6 4.6 4.6 5.6 Q2 5.8 0 6.4 Q-2 5.8 -4.6 5.6 Q-7.6 4.6 -7.2 1 Q-6.6 -2 -7.4 -4.6 Z" fill="#fff" stroke="#7c7c7c" stroke-width=".9"/><text y="3" font-size="8" text-anchor="middle" fill="#555">1</text></g>
<g transform="translate(919.2,357.6)"><path d="M-7.4 -4.6 Q-6 -6.4 -4.2 -5.2 Q-2.2 -6.6 0 -5.4 Q2.2 -6.6 4.2 -5.2 Q6 -6.4 7.4 -4.6 Q6.6 -2 7.2 1 Q7.6 4.6 4.6 5.6 Q2 5.8 0 6.4 Q-2 5.8 -4.6 5.6 Q-7.6 4.6 -7.2 1 Q-6.6 -2 -7.4 -4.6 Z" fill="#fff" stroke="#7c7c7c" stroke-width=".9"/><text y="3" font-size="8" text-anchor="middle" fill="#555">4</text></g>
<g transform="translate(890.8,440.5)"><path d="M-7.4 -4.6 Q-6 -6.4 -4.2 -5.2 Q-2.2 -6.6 0 -5.4 Q2.2 -6.6 4.2 -5.2 Q6 -6.4 7.4 -4.6 Q6.6 -2 7.2 1 Q7.6 4.6 4.6 5.6 Q2 5.8 0 6.4 Q-2 5.8 -4.6 5.6 Q-7.6 4.6 -7.2 1 Q-6.6 -2 -7.4 -4.6 Z" fill="#fff" stroke="#7c7c7c" stroke-width=".9"/><text y="3" font-size="8" text-anchor="middle" fill="#555">18</text></g>
<g transform="translate(916.2,443.6)"><path d="M-7.4 -4.6 Q-6 -6.4 -4.2 -5.2 Q-2.2 -6.6 0 -5.4 Q2.2 -6.6 4.2 -5.2 Q6 -6.4 7.4 -4.6 Q6.6 -2 7.2 1 Q7.6 4.6 4.6 5.6 Q2 5.8 0 6.4 Q-2 5.8 -4.6 5.6 Q-7.6 4.6 -7.2 1 Q-6.6 -2 -7.4 -4.6 Z" fill="#fff" stroke="#7c7c7c" stroke-width=".9"/><text y="3" font-size="8" text-anchor="middle" fill="#555">1</text></g>
<g transform="translate(843.6,445.3)"><path d="M-7.4 -4.6 Q-6 -6.4 -4.2 -5.2 Q-2.2 -6.6 0 -5.4 Q2.2 -6.6 4.2 -5.2 Q6 -6.4 7.4 -4.6 Q6.6 -2 7.2 1 Q7.6 4.6 4.6 5.6 Q2 5.8 0 6.4 Q-2 5.8 -4.6 5.6 Q-7.6 4.6 -7.2 1 Q-6.6 -2 -7.4 -4.6 Z" fill="#fff" stroke="#7c7c7c" stroke-width=".9"/><text y="3" font-size="8" text-anchor="middle" fill="#555">21</text></g>
<g transform="translate(1058.1,419)"><path d="M-7.4 -4.6 Q-6 -6.4 -4.2 -5.2 Q-2.2 -6.6 0 -5.4 Q2.2 -6.6 4.2 -5.2 Q6 -6.4 7.4 -4.6 Q6.6 -2 7.2 1 Q7.6 4.6 4.6 5.6 Q2 5.8 0 6.4 Q-2 5.8 -4.6 5.6 Q-7.6 4.6 -7.2 1 Q-6.6 -2 -7.4 -4.6 Z" fill="#fff" stroke="#7c7c7c" stroke-width=".9"/><text y="3" font-size="8" text-anchor="middle" fill="#555">4</text></g>
<g transform="translate(1056.8,459.4)"><path d="M-7.4 -4.6 Q-6 -6.4 -4.2 -5.2 Q-2.2 -6.6 0 -5.4 Q2.2 -6.6 4.2 -5.2 Q6 -6.4 7.4 -4.6 Q6.6 -2 7.2 1 Q7.6 4.6 4.6 5.6 Q2 5.8 0 6.4 Q-2 5.8 -4.6 5.6 Q-7.6 4.6 -7.2 1 Q-6.6 -2 -7.4 -4.6 Z" fill="#fff" stroke="#7c7c7c" stroke-width=".9"/><text y="3" font-size="8" text-anchor="middle" fill="#555">32</text></g>
<g transform="translate(1117.6,474)"><path d="M-7.4 -4.6 Q-6 -6.4 -4.2 -5.2 Q-2.2 -6.6 0 -5.4 Q2.2 -6.6 4.2 -5.2 Q6 -6.4 7.4 -4.6 Q6.6 -2 7.2 1 Q7.6 4.6 4.6 5.6 Q2 5.8 0 6.4 Q-2 5.8 -4.6 5.6 Q-7.6 4.6 -7.2 1 Q-6.6 -2 -7.4 -4.6 Z" fill="#fff" stroke="#7c7c7c" stroke-width=".9"/><text y="3" font-size="8" text-anchor="middle" fill="#555">10</text></g>
<g transform="translate(1127,590)"><path d="M-7.4 -4.6 Q-6 -6.4 -4.2 -5.2 Q-2.2 -6.6 0 -5.4 Q2.2 -6.6 4.2 -5.2 Q6 -6.4 7.4 -4.6 Q6.6 -2 7.2 1 Q7.6 4.6 4.6 5.6 Q2 5.8 0 6.4 Q-2 5.8 -4.6 5.6 Q-7.6 4.6 -7.2 1 Q-6.6 -2 -7.4 -4.6 Z" fill="#fff" stroke="#7c7c7c" stroke-width=".9"/><text y="3" font-size="8" text-anchor="middle" fill="#555">2</text></g>
<circle cx="791.5" cy="264" r="1.3" fill="#fff" stroke="#777" stroke-width="0.8"/>
<text x="794.3" y="267.8" font-size="9.6" text-anchor="start" fill="#4a4a4a" font-weight="normal" stroke="#fff" stroke-width="2" stroke-opacity=".85" paint-order="stroke" stroke-linejoin="round" textLength="22.1" lengthAdjust="spacingAndGlyphs">Rivas</text>
<circle cx="785.9" cy="289.2" r="1.3" fill="#fff" stroke="#777" stroke-width="0.8"/>
<text x="788.9" y="288.7" font-size="9.6" text-anchor="start" fill="#4a4a4a" font-weight="normal" stroke="#fff" stroke-width="2" stroke-opacity=".85" paint-order="stroke" stroke-linejoin="round" textLength="38.6" lengthAdjust="spacingAndGlyphs">San Juan</text>
<text x="788.9" y="297.7" font-size="9.6" text-anchor="start" fill="#4a4a4a" font-weight="normal" stroke="#fff" stroke-width="2" stroke-opacity=".85" paint-order="stroke" stroke-linejoin="round" textLength="28.4" lengthAdjust="spacingAndGlyphs">del Sur</text>
<text x="847" y="384.7" font-size="9.6" text-anchor="start" fill="#4a4a4a" font-weight="normal" stroke="#fff" stroke-width="2" stroke-opacity=".85" paint-order="stroke" stroke-linejoin="round" textLength="31.4" lengthAdjust="spacingAndGlyphs">Liberia</text>
<circle cx="797.4" cy="410" r="1.3" fill="#fff" stroke="#777" stroke-width="0.8"/>
<text x="799.8" y="409.1" font-size="9.6" text-anchor="start" fill="#4a4a4a" font-weight="normal" stroke="#fff" stroke-width="2" stroke-opacity=".85" paint-order="stroke" stroke-linejoin="round" textLength="22.9" lengthAdjust="spacingAndGlyphs">Playa</text>
<text x="799.8" y="418.1" font-size="9.6" text-anchor="start" fill="#4a4a4a" font-weight="normal" stroke="#fff" stroke-width="2" stroke-opacity=".85" paint-order="stroke" stroke-linejoin="round" textLength="38.7" lengthAdjust="spacingAndGlyphs">Flamingo</text>
<circle cx="789.3" cy="430" r="1.3" fill="#fff" stroke="#777" stroke-width="0.8"/>
<text x="791.8" y="433.4" font-size="9.6" text-anchor="start" fill="#4a4a4a" font-weight="normal" stroke="#fff" stroke-width="2" stroke-opacity=".85" paint-order="stroke" stroke-linejoin="round" textLength="45.3" lengthAdjust="spacingAndGlyphs">Tamarindo</text>
<circle cx="896.6" cy="411.3" r="1.3" fill="#fff" stroke="#777" stroke-width="0.8"/>
<text x="899.6" y="414.4" font-size="9.6" text-anchor="start" fill="#4a4a4a" font-weight="normal" stroke="#fff" stroke-width="2" stroke-opacity=".85" paint-order="stroke" stroke-linejoin="round" textLength="25.5" lengthAdjust="spacingAndGlyphs">Cañas</text>
<circle cx="961.3" cy="404.5" r="1.3" fill="#fff" stroke="#777" stroke-width="0.8"/>
<text x="964.5" y="408.4" font-size="9.6" text-anchor="start" fill="#4a4a4a" font-weight="normal" stroke="#fff" stroke-width="2" stroke-opacity=".85" paint-order="stroke" stroke-linejoin="round" textLength="46" lengthAdjust="spacingAndGlyphs">La Fortuna</text>
<circle cx="817.6" cy="478.2" r="1.3" fill="#fff" stroke="#777" stroke-width="0.8"/>
<text x="820.7" y="482.1" font-size="9.6" text-anchor="start" fill="#4a4a4a" font-weight="normal" stroke="#fff" stroke-width="2" stroke-opacity=".85" paint-order="stroke" stroke-linejoin="round" textLength="29.7" lengthAdjust="spacingAndGlyphs">Nosara</text>
<circle cx="934.8" cy="476.5" r="1.3" fill="#fff" stroke="#777" stroke-width="0.8"/>
<text x="937.9" y="480.4" font-size="9.6" text-anchor="start" fill="#4a4a4a" font-weight="normal" stroke="#fff" stroke-width="2" stroke-opacity=".85" paint-order="stroke" stroke-linejoin="round" textLength="46.7" lengthAdjust="spacingAndGlyphs">Puntarenas</text>
<circle cx="963.8" cy="530.5" r="1.3" fill="#fff" stroke="#777" stroke-width="0.8"/>
<text x="967.2" y="534.3" font-size="9.6" text-anchor="start" fill="#4a4a4a" font-weight="normal" stroke="#fff" stroke-width="2" stroke-opacity=".85" paint-order="stroke" stroke-linejoin="round" textLength="19.4" lengthAdjust="spacingAndGlyphs">Jacó</text>
<circle cx="1102.6" cy="240.8" r="1.3" fill="#fff" stroke="#777" stroke-width="0.8"/>
<text x="1105.7" y="244.4" font-size="9.6" text-anchor="start" fill="#4a4a4a" font-weight="normal" stroke="#fff" stroke-width="2" stroke-opacity=".85" paint-order="stroke" stroke-linejoin="round" textLength="56.9" lengthAdjust="spacingAndGlyphs">Monkey Point</text>
<circle cx="992.2" cy="425.8" r="1.3" fill="#fff" stroke="#777" stroke-width="0.8"/>
<text x="994.9" y="429.7" font-size="9.6" text-anchor="start" fill="#4a4a4a" font-weight="normal" stroke="#fff" stroke-width="2" stroke-opacity=".85" paint-order="stroke" stroke-linejoin="round" textLength="50.5" lengthAdjust="spacingAndGlyphs">Cd Quesada</text>
<circle cx="986.8" cy="460" r="1.3" fill="#fff" stroke="#777" stroke-width="0.8"/>
<text x="989.3" y="463.4" font-size="9.6" text-anchor="start" fill="#4a4a4a" font-weight="normal" stroke="#fff" stroke-width="2" stroke-opacity=".85" paint-order="stroke" stroke-linejoin="round" textLength="47.6" lengthAdjust="spacingAndGlyphs">San Ramón</text>
<circle cx="1124.9" cy="459.2" r="1.3" fill="#fff" stroke="#777" stroke-width="0.8"/>
<text x="1127.8" y="462.8" font-size="9.6" text-anchor="start" fill="#4a4a4a" font-weight="normal" stroke="#fff" stroke-width="2" stroke-opacity=".85" paint-order="stroke" stroke-linejoin="round" textLength="38" lengthAdjust="spacingAndGlyphs">Siquirres</text>
<text x="1193" y="478.7" font-size="9.6" text-anchor="start" fill="#4a4a4a" font-weight="normal" stroke="#fff" stroke-width="2" stroke-opacity=".85" paint-order="stroke" stroke-linejoin="round" textLength="25.7" lengthAdjust="spacingAndGlyphs">Limón</text>
<circle cx="1031" cy="556.5" r="1.3" fill="#fff" stroke="#777" stroke-width="0.8"/>
<text x="1034" y="560.2" font-size="9.6" text-anchor="start" fill="#4a4a4a" font-weight="normal" stroke="#fff" stroke-width="2" stroke-opacity=".85" paint-order="stroke" stroke-linejoin="round" textLength="30.9" lengthAdjust="spacingAndGlyphs">Quepos</text>
<circle cx="1096.5" cy="564.5" r="1.3" fill="#fff" stroke="#777" stroke-width="0.8"/>
<text x="1099.7" y="563.1" font-size="9.6" text-anchor="start" fill="#4a4a4a" font-weight="normal" stroke="#fff" stroke-width="2" stroke-opacity=".85" paint-order="stroke" stroke-linejoin="round" textLength="53.5" lengthAdjust="spacingAndGlyphs">San Isidro de</text>
<text x="1099.7" y="572.6" font-size="9.6" text-anchor="start" fill="#4a4a4a" font-weight="normal" stroke="#fff" stroke-width="2" stroke-opacity=".85" paint-order="stroke" stroke-linejoin="round" textLength="40.8" lengthAdjust="spacingAndGlyphs">El General</text>
<circle cx="1202.3" cy="645.8" r="1.3" fill="#fff" stroke="#777" stroke-width="0.8"/>
<text x="1205.1" y="649.2" font-size="9.6" text-anchor="start" fill="#4a4a4a" font-weight="normal" stroke="#fff" stroke-width="2" stroke-opacity=".85" paint-order="stroke" stroke-linejoin="round" textLength="34.8" lengthAdjust="spacingAndGlyphs">San Vito</text>
<circle cx="1175.3" cy="673.5" r="1.3" fill="#fff" stroke="#777" stroke-width="0.8"/>
<text x="1178.4" y="677.2" font-size="9.6" text-anchor="start" fill="#4a4a4a" font-weight="normal" stroke="#fff" stroke-width="2" stroke-opacity=".85" paint-order="stroke" stroke-linejoin="round" textLength="27.5" lengthAdjust="spacingAndGlyphs">Golfito</text>
<circle cx="1233.5" cy="524" r="1.3" fill="#fff" stroke="#777" stroke-width="0.8"/>
<text x="1236" y="523.2" font-size="9.6" text-anchor="start" fill="#4a4a4a" font-weight="normal" stroke="#fff" stroke-width="2" stroke-opacity=".85" paint-order="stroke" stroke-linejoin="round" textLength="50.6" lengthAdjust="spacingAndGlyphs">Puerto Viejo</text>
<text x="1236" y="532.5" font-size="9.6" text-anchor="start" fill="#4a4a4a" font-weight="normal" stroke="#fff" stroke-width="2" stroke-opacity=".85" paint-order="stroke" stroke-linejoin="round" textLength="59.1" lengthAdjust="spacingAndGlyphs">de Talamanca</text>
<circle cx="1271.8" cy="553.7" r="1.3" fill="#fff" stroke="#777" stroke-width="0.8"/>
<text x="1274.7" y="557.5" font-size="9.6" text-anchor="start" fill="#4a4a4a" font-weight="normal" stroke="#fff" stroke-width="2" stroke-opacity=".85" paint-order="stroke" stroke-linejoin="round" textLength="51.8" lengthAdjust="spacingAndGlyphs">Changuinola</text>
<circle cx="1474.3" cy="690.7" r="1.3" fill="#fff" stroke="#777" stroke-width="0.8"/>
<text x="1477" y="694.4" font-size="9.6" text-anchor="start" fill="#4a4a4a" font-weight="normal" stroke="#fff" stroke-width="2" stroke-opacity=".85" paint-order="stroke" stroke-linejoin="round" textLength="23.5" lengthAdjust="spacingAndGlyphs">Santa</text>
<circle cx="1277.6" cy="651.8" r="1.3" fill="#fff" stroke="#777" stroke-width="0.8"/>
<text x="1280.3" y="655.7" font-size="9.6" text-anchor="start" fill="#4a4a4a" font-weight="normal" stroke="#fff" stroke-width="2" stroke-opacity=".85" paint-order="stroke" stroke-linejoin="round" textLength="55.2" lengthAdjust="spacingAndGlyphs">Bajo Boquete</text>
<circle cx="1023.8" cy="471" r="1.3" fill="#fff" stroke="#777" stroke-width="0.8"/>
<text x="1021.6" y="474.8" font-size="9.6" text-anchor="end" fill="#4a4a4a" font-weight="normal" stroke="#fff" stroke-width="2" stroke-opacity=".85" paint-order="stroke" stroke-linejoin="round" textLength="34" lengthAdjust="spacingAndGlyphs">Alajuela</text>
<circle cx="1220" cy="512.2" r="1.3" fill="#fff" stroke="#777" stroke-width="0.8"/>
<text x="1216.9" y="516.1" font-size="9.6" text-anchor="end" fill="#4a4a4a" font-weight="normal" stroke="#fff" stroke-width="2" stroke-opacity=".85" paint-order="stroke" stroke-linejoin="round" textLength="31.4" lengthAdjust="spacingAndGlyphs">Cahuita</text>
<circle cx="1153.2" cy="687.8" r="1.3" fill="#fff" stroke="#777" stroke-width="0.8"/>
<text x="1150.7" y="691.2" font-size="9.6" text-anchor="end" fill="#4a4a4a" font-weight="normal" stroke="#fff" stroke-width="2" stroke-opacity=".85" paint-order="stroke" stroke-linejoin="round" textLength="65.1" lengthAdjust="spacingAndGlyphs">Puerto Jiménez</text>
<circle cx="1220.3" cy="687.8" r="1.3" fill="#fff" stroke="#777" stroke-width="0.8"/>
<text x="1217.8" y="691.2" font-size="9.6" text-anchor="end" fill="#4a4a4a" font-weight="normal" stroke="#fff" stroke-width="2" stroke-opacity=".85" paint-order="stroke" stroke-linejoin="round" textLength="54" lengthAdjust="spacingAndGlyphs">Paso Canoas</text>
<circle cx="1246.7" cy="658.6" r="1.3" fill="#fff" stroke="#777" stroke-width="0.8"/>
<text x="1244.5" y="662" font-size="9.6" text-anchor="end" fill="#4a4a4a" font-weight="normal" stroke="#fff" stroke-width="2" stroke-opacity=".85" paint-order="stroke" stroke-linejoin="round" textLength="28" lengthAdjust="spacingAndGlyphs">Volcán</text>
<circle cx="1281.5" cy="576.1" r="1.3" fill="#fff" stroke="#777" stroke-width="0.8"/>
<text x="1279" y="579.9" font-size="9.6" text-anchor="end" fill="#4a4a4a" font-weight="normal" stroke="#fff" stroke-width="2" stroke-opacity=".85" paint-order="stroke" stroke-linejoin="round" textLength="40.8" lengthAdjust="spacingAndGlyphs">Almirante</text>
<circle cx="1307.3" cy="569.5" r="2" fill="#fff" stroke="#444" stroke-width="1.1"/>
<text x="1310.7" y="573.3" font-size="9.6" text-anchor="start" fill="#333" font-weight="normal" stroke="#fff" stroke-width="2" stroke-opacity=".85" paint-order="stroke" stroke-linejoin="round" textLength="63.4" lengthAdjust="spacingAndGlyphs">Bocas del Toro</text>
<text x="1046.6" y="489.8" font-size="13.6" text-anchor="start" fill="#3a3a3a" font-weight="normal" stroke="#fff" stroke-width="2" stroke-opacity=".85" paint-order="stroke" stroke-linejoin="round" textLength="55.7" lengthAdjust="spacingAndGlyphs">San José</text>
<text x="1046.6" y="489.8" font-size="13.6" fill="#3a3a3a" stroke="#3a3a3a" stroke-width=".45" textLength="55.7" lengthAdjust="spacingAndGlyphs">San José</text>
<g transform="translate(868,339.6)" fill="none" stroke="#3f80ea"><circle r="15.4" stroke-width=".85" stroke-opacity=".65"/><circle r="13.2" stroke-width=".95" stroke-opacity=".8"/><circle r="10.8" fill="#fff" stroke-width="1.5" stroke-opacity=".95"/><text y="3.7" font-size="10.4" font-weight="bold" text-anchor="middle" fill="#4a8be8" stroke="none"></text></g>
<g transform="translate(934.5,371.4)" fill="none" stroke="#3f80ea"><circle r="15.4" stroke-width=".85" stroke-opacity=".65"/><circle r="13.2" stroke-width=".95" stroke-opacity=".8"/><circle r="10.8" fill="#fff" stroke-width="1.5" stroke-opacity=".95"/><text y="3.7" font-size="10.4" font-weight="bold" text-anchor="middle" fill="#4a8be8" stroke="none">2</text></g>
<g transform="translate(937,423.2)" fill="none" stroke="#3f80ea"><circle r="15.4" stroke-width=".85" stroke-opacity=".65"/><circle r="13.2" stroke-width=".95" stroke-opacity=".8"/><circle r="10.8" fill="#fff" stroke-width="1.5" stroke-opacity=".95"/><text y="3.7" font-size="10.4" font-weight="bold" text-anchor="middle" fill="#4a8be8" stroke="none">2</text></g>
<g transform="translate(877.9,500.8)" fill="none" stroke="#3f80ea"><circle r="15.4" stroke-width=".85" stroke-opacity=".65"/><circle r="13.2" stroke-width=".95" stroke-opacity=".8"/><circle r="10.8" fill="#fff" stroke-width="1.5" stroke-opacity=".95"/><text y="3.7" font-size="10.4" font-weight="bold" text-anchor="middle" fill="#4a8be8" stroke="none">2</text></g>
<g transform="translate(1098,449.6)" fill="none" stroke="#3f80ea"><circle r="15.4" stroke-width=".85" stroke-opacity=".65"/><circle r="13.2" stroke-width=".95" stroke-opacity=".8"/><circle r="10.8" fill="#fff" stroke-width="1.5" stroke-opacity=".95"/><text y="3.7" font-size="10.4" font-weight="bold" text-anchor="middle" fill="#4a8be8" stroke="none">5</text></g>
<g transform="translate(1048.8,490.1)" fill="none" stroke="#3f80ea"><circle r="15.4" stroke-width=".85" stroke-opacity=".65"/><circle r="13.2" stroke-width=".95" stroke-opacity=".8"/><circle r="10.8" fill="#fff" stroke-width="1.5" stroke-opacity=".95"/><text y="3.7" font-size="10.4" font-weight="bold" text-anchor="middle" fill="#4a8be8" stroke="none">14</text></g>
<g transform="translate(1077.7,507.4)" fill="none" stroke="#3f80ea"><circle r="15.4" stroke-width=".85" stroke-opacity=".65"/><circle r="13.2" stroke-width=".95" stroke-opacity=".8"/><circle r="10.8" fill="#fff" stroke-width="1.5" stroke-opacity=".95"/><text y="3.7" font-size="10.4" font-weight="bold" text-anchor="middle" fill="#4a8be8" stroke="none">4</text></g>
<g transform="translate(1059.8,533.4)" fill="none" stroke="#3f80ea"><circle r="15.4" stroke-width=".85" stroke-opacity=".65"/><circle r="13.2" stroke-width=".95" stroke-opacity=".8"/><circle r="10.8" fill="#fff" stroke-width="1.5" stroke-opacity=".95"/><text y="3.7" font-size="10.4" font-weight="bold" text-anchor="middle" fill="#4a8be8" stroke="none">3</text></g>
<g transform="translate(1111.6,569.2)" fill="none" stroke="#3f80ea"><circle r="15.4" stroke-width=".85" stroke-opacity=".65"/><circle r="13.2" stroke-width=".95" stroke-opacity=".8"/><circle r="10.8" fill="#fff" stroke-width="1.5" stroke-opacity=".95"/><text y="3.7" font-size="10.4" font-weight="bold" text-anchor="middle" fill="#4a8be8" stroke="none">2</text></g>
<g transform="translate(812.2,326)"><circle cx="1.1" cy="1.7" r="11.7" fill="#000" opacity=".42" filter="url(#bl)"/><circle r="11.7" fill="#fff"/><path d="M0 7.5 C-1.4 4 -4.9 1 -4.9 -2.4 A4.9 4.9 0 0 1 4.9 -2.4 C4.9 1 1.4 4 0 7.5 Z M0 -4.3 a2.3 2.3 0 1 0 0.01 0 Z" fill="#ff9800" fill-rule="evenodd"/></g>
<g transform="translate(840.2,341.6)"><circle cx="1.1" cy="1.7" r="11.7" fill="#000" opacity=".42" filter="url(#bl)"/><circle r="11.7" fill="#fff"/><path d="M0 7.5 C-1.4 4 -4.9 1 -4.9 -2.4 A4.9 4.9 0 0 1 4.9 -2.4 C4.9 1 1.4 4 0 7.5 Z M0 -4.3 a2.3 2.3 0 1 0 0.01 0 Z" fill="#ff9800" fill-rule="evenodd"/></g>
<g transform="translate(958.6,339.9)"><circle cx="1.1" cy="1.7" r="11.7" fill="#000" opacity=".42" filter="url(#bl)"/><circle r="11.7" fill="#fff"/><path d="M0 7.5 C-1.4 4 -4.9 1 -4.9 -2.4 A4.9 4.9 0 0 1 4.9 -2.4 C4.9 1 1.4 4 0 7.5 Z M0 -4.3 a2.3 2.3 0 1 0 0.01 0 Z" fill="#ff9800" fill-rule="evenodd"/></g>
<g transform="translate(845.6,373.1)"><circle cx="1.1" cy="1.7" r="11.7" fill="#000" opacity=".42" filter="url(#bl)"/><circle r="11.7" fill="#fff"/><path d="M0 7.5 C-1.4 4 -4.9 1 -4.9 -2.4 A4.9 4.9 0 0 1 4.9 -2.4 C4.9 1 1.4 4 0 7.5 Z M0 -4.3 a2.3 2.3 0 1 0 0.01 0 Z" fill="#ff9800" fill-rule="evenodd"/></g>
<g transform="translate(901.7,371.9)"><circle cx="1.1" cy="1.7" r="11.7" fill="#000" opacity=".42" filter="url(#bl)"/><circle r="11.7" fill="#fff"/><path d="M0 7.5 C-1.4 4 -4.9 1 -4.9 -2.4 A4.9 4.9 0 0 1 4.9 -2.4 C4.9 1 1.4 4 0 7.5 Z M0 -4.3 a2.3 2.3 0 1 0 0.01 0 Z" fill="#ff9800" fill-rule="evenodd"/></g>
<g transform="translate(807.6,428)"><circle cx="1.1" cy="1.7" r="11.7" fill="#000" opacity=".42" filter="url(#bl)"/><circle r="11.7" fill="#fff"/><path d="M0 7.5 C-1.4 4 -4.9 1 -4.9 -2.4 A4.9 4.9 0 0 1 4.9 -2.4 C4.9 1 1.4 4 0 7.5 Z M0 -4.3 a2.3 2.3 0 1 0 0.01 0 Z" fill="#ff9800" fill-rule="evenodd"/></g>
<g transform="translate(966.4,441.9)"><circle cx="1.1" cy="1.7" r="11.7" fill="#000" opacity=".42" filter="url(#bl)"/><circle r="11.7" fill="#fff"/><path d="M0 7.5 C-1.4 4 -4.9 1 -4.9 -2.4 A4.9 4.9 0 0 1 4.9 -2.4 C4.9 1 1.4 4 0 7.5 Z M0 -4.3 a2.3 2.3 0 1 0 0.01 0 Z" fill="#ff9800" fill-rule="evenodd"/></g>
<g transform="translate(849.5,454.8)"><circle cx="1.1" cy="1.7" r="11.7" fill="#000" opacity=".42" filter="url(#bl)"/><circle r="11.7" fill="#fff"/><path d="M0 7.5 C-1.4 4 -4.9 1 -4.9 -2.4 A4.9 4.9 0 0 1 4.9 -2.4 C4.9 1 1.4 4 0 7.5 Z M0 -4.3 a2.3 2.3 0 1 0 0.01 0 Z" fill="#ff9800" fill-rule="evenodd"/></g>
<g transform="translate(964.7,505.4)"><circle cx="1.1" cy="1.7" r="11.7" fill="#000" opacity=".42" filter="url(#bl)"/><circle r="11.7" fill="#fff"/><path d="M0 7.5 C-1.4 4 -4.9 1 -4.9 -2.4 A4.9 4.9 0 0 1 4.9 -2.4 C4.9 1 1.4 4 0 7.5 Z M0 -4.3 a2.3 2.3 0 1 0 0.01 0 Z" fill="#ff9800" fill-rule="evenodd"/></g>
<g transform="translate(1005.1,400.8)"><circle cx="1.1" cy="1.7" r="11.7" fill="#000" opacity=".42" filter="url(#bl)"/><circle r="11.7" fill="#fff"/><path d="M0 7.5 C-1.4 4 -4.9 1 -4.9 -2.4 A4.9 4.9 0 0 1 4.9 -2.4 C4.9 1 1.4 4 0 7.5 Z M0 -4.3 a2.3 2.3 0 1 0 0.01 0 Z" fill="#ff9800" fill-rule="evenodd"/></g>
<g transform="translate(1147.3,419.8)"><circle cx="1.1" cy="1.7" r="11.7" fill="#000" opacity=".42" filter="url(#bl)"/><circle r="11.7" fill="#fff"/><path d="M0 7.5 C-1.4 4 -4.9 1 -4.9 -2.4 A4.9 4.9 0 0 1 4.9 -2.4 C4.9 1 1.4 4 0 7.5 Z M0 -4.3 a2.3 2.3 0 1 0 0.01 0 Z" fill="#ff9800" fill-rule="evenodd"/></g>
<g transform="translate(1163.1,459)"><circle cx="1.1" cy="1.7" r="11.7" fill="#000" opacity=".42" filter="url(#bl)"/><circle r="11.7" fill="#fff"/><path d="M0 7.5 C-1.4 4 -4.9 1 -4.9 -2.4 A4.9 4.9 0 0 1 4.9 -2.4 C4.9 1 1.4 4 0 7.5 Z M0 -4.3 a2.3 2.3 0 1 0 0.01 0 Z" fill="#ff9800" fill-rule="evenodd"/></g>
<g transform="translate(1190.1,475.7)"><circle cx="1.1" cy="1.7" r="11.7" fill="#000" opacity=".42" filter="url(#bl)"/><circle r="11.7" fill="#fff"/><path d="M0 7.5 C-1.4 4 -4.9 1 -4.9 -2.4 A4.9 4.9 0 0 1 4.9 -2.4 C4.9 1 1.4 4 0 7.5 Z M0 -4.3 a2.3 2.3 0 1 0 0.01 0 Z" fill="#ff9800" fill-rule="evenodd"/></g>
<g transform="translate(1101.9,477)"><circle cx="1.1" cy="1.7" r="11.7" fill="#000" opacity=".42" filter="url(#bl)"/><circle r="11.7" fill="#fff"/><path d="M0 7.5 C-1.4 4 -4.9 1 -4.9 -2.4 A4.9 4.9 0 0 1 4.9 -2.4 C4.9 1 1.4 4 0 7.5 Z M0 -4.3 a2.3 2.3 0 1 0 0.01 0 Z" fill="#ff9800" fill-rule="evenodd"/></g>
<g transform="translate(1043.7,541.6)"><circle cx="1.1" cy="1.7" r="11.7" fill="#000" opacity=".42" filter="url(#bl)"/><circle r="11.7" fill="#fff"/><path d="M0 7.5 C-1.4 4 -4.9 1 -4.9 -2.4 A4.9 4.9 0 0 1 4.9 -2.4 C4.9 1 1.4 4 0 7.5 Z M0 -4.3 a2.3 2.3 0 1 0 0.01 0 Z" fill="#ff9800" fill-rule="evenodd"/></g>
<g transform="translate(1139.1,585.5)"><circle cx="1.1" cy="1.7" r="11.7" fill="#000" opacity=".42" filter="url(#bl)"/><circle r="11.7" fill="#fff"/><path d="M0 7.5 C-1.4 4 -4.9 1 -4.9 -2.4 A4.9 4.9 0 0 1 4.9 -2.4 C4.9 1 1.4 4 0 7.5 Z M0 -4.3 a2.3 2.3 0 1 0 0.01 0 Z" fill="#ff9800" fill-rule="evenodd"/></g>
<g transform="translate(1127.4,622)"><circle cx="1.1" cy="1.7" r="11.7" fill="#000" opacity=".42" filter="url(#bl)"/><circle r="11.7" fill="#fff"/><path d="M0 7.5 C-1.4 4 -4.9 1 -4.9 -2.4 A4.9 4.9 0 0 1 4.9 -2.4 C4.9 1 1.4 4 0 7.5 Z M0 -4.3 a2.3 2.3 0 1 0 0.01 0 Z" fill="#ff9800" fill-rule="evenodd"/></g>
<g transform="translate(875.4,342.1)"><circle cx="1.1" cy="1.7" r="11.7" fill="#000" opacity=".42" filter="url(#bl)"/><circle r="11.7" fill="#fff"/><path d="M0 7.5 C-1.4 4 -4.9 1 -4.9 -2.4 A4.9 4.9 0 0 1 4.9 -2.4 C4.9 1 1.4 4 0 7.5 Z M0 -4.3 a2.3 2.3 0 1 0 0.01 0 Z" fill="#ff9800" fill-rule="evenodd"/></g>
<g transform="translate(946.7,382.8)"><circle cx="1.1" cy="1.7" r="11.7" fill="#000" opacity=".42" filter="url(#bl)"/><circle r="11.7" fill="#fff"/><path d="M0 7.5 C-1.4 4 -4.9 1 -4.9 -2.4 A4.9 4.9 0 0 1 4.9 -2.4 C4.9 1 1.4 4 0 7.5 Z M0 -4.3 a2.3 2.3 0 1 0 0.01 0 Z" fill="#ff9800" fill-rule="evenodd"/></g>
</svg>
<div style="position:absolute;left:8px;top:8.1px;width:136.6px;height:31.3px;background:#fff;border-radius:2px;box-shadow:0 1px 3px rgba(0,0,0,.3);font-size:14px;line-height:32.4px;white-space:nowrap">
 <span style="position:absolute;left:13.4px;font-weight:bold;color:#111;letter-spacing:-.1px">Mapa</span>
 <span style="position:absolute;left:61px;top:0;width:1px;height:31.3px;background:#ececec"></span>
 <span style="position:absolute;left:76.3px;color:#5a5a5a;font-size:14.1px">Satélite</span>
</div>
<div style="position:absolute;left:947px;top:388px;width:28px;height:28px;background:#3f51b5;box-shadow:0 2px 4px rgba(0,0,0,.3)"><span style="position:absolute;left:8px;top:13px;width:12px;height:1.6px;background:#fff"></span><span style="position:absolute;left:13.2px;top:8px;width:1.6px;height:12px;background:#fff"></span></div>
<div style="position:absolute;left:947px;top:424px;width:28px;height:28px;background:#3f51b5;box-shadow:0 2px 4px rgba(0,0,0,.3)"><span style="position:absolute;left:8px;top:13px;width:12px;height:1.6px;background:#fff"></span></div>
<div style="position:absolute;left:7.8px;top:453px;font-size:14.6px;line-height:18px;color:#f6f8f8;letter-spacing:-.45px;-webkit-text-stroke:.4px #f6f8f8;text-shadow:0 0 1px #4a6a74,0 0 1px #4a6a74,0 0 1.5px #4a6a74,0 0 2px #56757f">Google</div>
<div style="position:absolute;left:732px;top:462px;width:271px;height:11px;background:rgba(245,250,247,.72)"></div>
<div style="position:absolute;top:463px;left:735px;font-size:7.9px;line-height:10px;color:#222;white-space:nowrap">Combinaciones de teclas</div>
<div style="position:absolute;top:463px;left:833px;font-size:7.9px;line-height:10px;color:#222;white-space:nowrap">Datos del mapa ©2025 Google</div>
<div style="position:absolute;top:463px;left:953.5px;font-size:7.9px;line-height:10px;color:#222;white-space:nowrap">Condiciones</div>

</div>
<div id="foot" class="abs"><span style="position:absolute;left:1411px;top:9px;font-size:10.2px;line-height:12px;color:#fff;white-space:nowrap">© Copyright 2025</span></div>
<div id="vsb" class="abs">
 <div style="position:absolute;left:3px;top:-3px;width:0;height:0;border-left:3.5px solid transparent;border-right:3.5px solid transparent;border-bottom:5px solid #8b8b8b"></div>
 <div style="position:absolute;left:3px;top:7px;width:7px;height:695px;border-radius:3.5px;background:#8b8b8b"></div>
 <div style="position:absolute;left:3px;top:719px;width:0;height:0;border-left:3.5px solid transparent;border-right:3.5px solid transparent;border-top:5.5px solid #8b8b8b"></div>
 <div style="position:absolute;left:11px;top:0;width:2px;height:736px;background:#ececec"></div>
</div>
<div id="hsb" class="abs">
 <div style="position:absolute;left:1px;top:2px;width:0;height:0;border-top:3.5px solid transparent;border-bottom:3.5px solid transparent;border-right:5px solid #8b8b8b"></div>
 <div style="position:absolute;left:9px;top:2px;width:1473px;height:7px;border-radius:3.5px;background:#8b8b8b"></div>
 <div style="position:absolute;left:1491px;top:2px;width:0;height:0;border-top:3.5px solid transparent;border-bottom:3.5px solid transparent;border-left:5.5px solid #8b8b8b"></div>
</div>
</body>
</html>
